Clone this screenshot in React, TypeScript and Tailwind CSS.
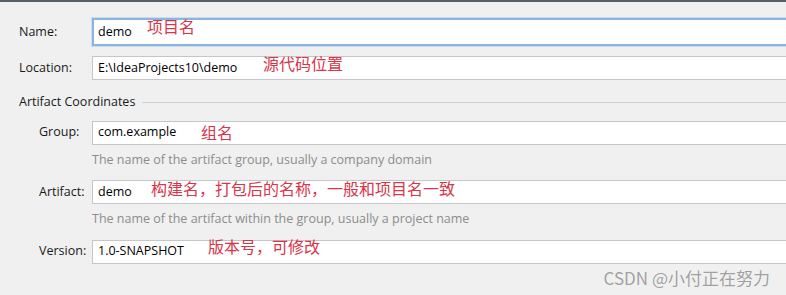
const ui = { fontFamily: '"Open Sans", "Noto Sans CJK SC", sans-serif' };
const cjk = { fontFamily: '"Noto Sans CJK SC", "Noto Sans", sans-serif' };

type FieldProps = {
  label: string;
  value: string;
  indent: 'top' | 'group';
  note?: string;
  focused?: boolean;
  noteClass?: string;
};

function Field({ label, value, indent, note, focused, noteClass }: FieldProps) {
  return (
    <div className="flex items-center">
      <label
        className={
          indent === 'top'
            ? 'w-[92px] pl-[19px] text-[12.5px] text-[#1a1a1a]'
            : 'w-[92px] pl-[39px] text-[12.5px] text-[#1a1a1a]'
        }
      >
        {label}
      </label>
      <div
        className={
          focused
            ? 'relative flex h-[28px] flex-1 items-center border-2 border-[#8db4de] bg-white pl-[4px] ring-1 ring-[#c9ddf1]'
            : 'relative flex h-[24px] flex-1 items-center border border-[#c6c6c6] bg-white pl-[5px]'
        }
      >
        <span className="text-[12.5px] text-black">{value}</span>
        {note ? (
          <span style={cjk} className={`absolute text-[16px] leading-none text-[#d8344a] ${noteClass}`}>
            {note}
          </span>
        ) : null}
      </div>
    </div>
  );
}

function Hint({ children }: { children: string }) {
  return <p className="pl-[92px] text-[12.5px] leading-none text-[#8c8c8c]">{children}</p>;
}

export default function App() {
  return (
    <div
      style={ui}
      className="relative h-[295px] w-[786px] overflow-hidden border-t-2 border-[#56606c] bg-[#f0f0f0]"
    >
      <div className="mr-[-4px] flex flex-col pt-[16px]">
        <Field label="Name:" value="demo" indent="top" focused note="项目名" noteClass="left-[53px] top-[-2px]" />
        <div className="mt-[10px]">
          <Field
            label="Location:"
            value="E:\IdeaProjects10\demo"
            indent="top"
            note="源代码位置"
            noteClass="left-[170px] top-[-2px]"
          />
        </div>

        <div className="mt-[13px] flex items-center pl-[19px]">
          <span className="text-[12.5px] text-[#1a1a1a]">Artifact Coordinates</span>
          <div className="ml-[7px] h-px flex-1 bg-[#d0d0d0]" />
        </div>

        <div className="mt-[9px]">
          <Field label="Group:" value="com.example" indent="group" note="组名" noteClass="left-[108px] top-[2px]" />
        </div>
        <div className="mt-[9px]">
          <Hint>The name of the artifact group, usually a company domain</Hint>
        </div>

        <div className="mt-[14px]">
          <Field
            label="Artifact:"
            value="demo"
            indent="group"
            note="构建名，打包后的名称，一般和项目名一致"
            noteClass="left-[58px] top-[-1px]"
          />
        </div>
        <div className="mt-[9px]">
          <Hint>The name of the artifact within the group, usually a project name</Hint>
        </div>

        <div className="mt-[14px]">
          <Field
            label="Version:"
            value="1.0-SNAPSHOT"
            indent="group"
            note="版本号，可修改"
            noteClass="left-[115px] top-[-3px]"
          />
        </div>
      </div>

      <span
        style={cjk}
        className="absolute right-[16px] bottom-[9px] text-[17px] leading-none text-[#a0a0a0] [text-shadow:0_0_1px_#ffffff]"
      >
        CSDN @小付正在努力
      </span>
    </div>
  );
}
